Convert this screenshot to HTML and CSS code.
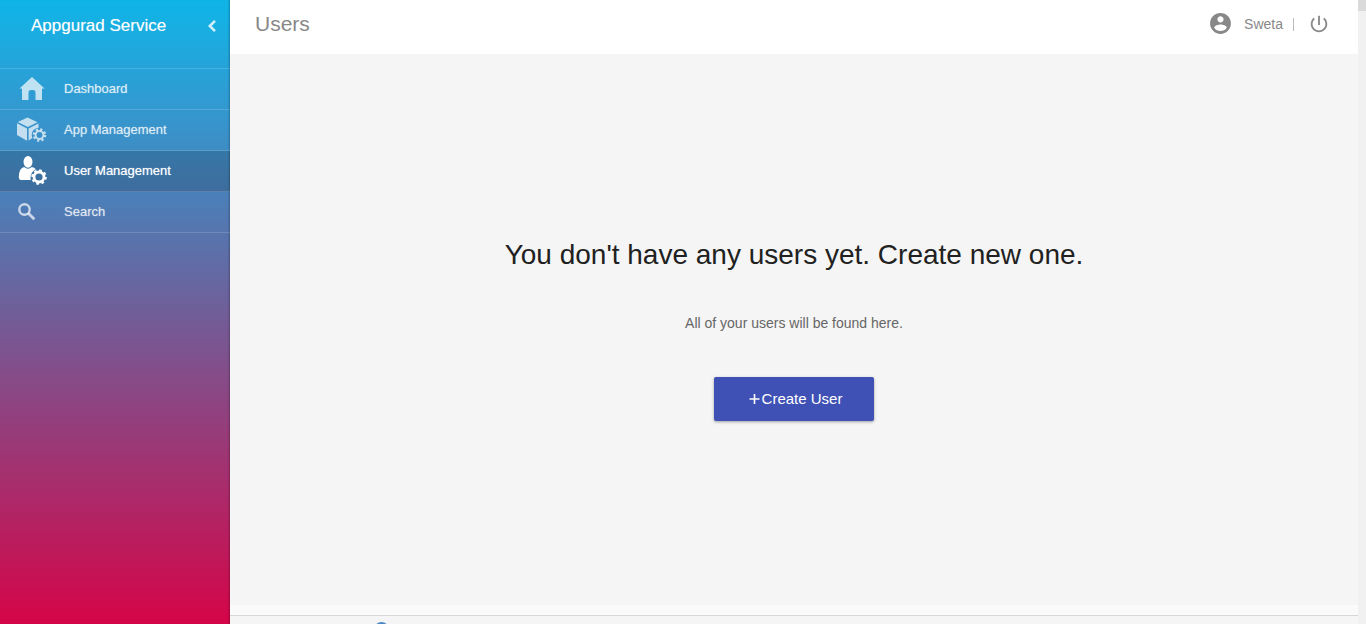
FILE: index.html
```html
<!DOCTYPE html>
<html lang="en">
<head>
<meta charset="utf-8">
<meta name="viewport" content="width=device-width, initial-scale=1">
<title>Users</title>
<link rel="stylesheet" href="styles.css">
</head>
<body>
<div class="shell">
  <aside class="sidebar">
    <div class="brand">
      <span class="brand-name">Appgurad Service</span>
      <button class="collapse" type="button" aria-label="Collapse menu">
        <svg width="10" height="14" viewBox="0 0 10 14"><path d="M8 1.800 2.800 7l5.200 5.200" fill="none" stroke="currentColor" stroke-width="2.600"/></svg>
      </button>
    </div>
    <nav class="menu">
      <a class="item" href="#">
        <svg class="icon" viewBox="0 0 32 32"><path fill="currentColor" d="M16 5 28.500 16.500H26V28h-6.500v-7.500q0-2.500-2.500-2.500h-2q-2.500 0-2.500 2.500V28H6V16.500H3.500z"/></svg>
        <span>Dashboard</span>
      </a>
      <a class="item" href="#">
        <svg class="icon" viewBox="0 0 32 32"><path fill="currentColor" d="M11.500 4.500 21.500 9.200 11.800 14 1.800 9zM1 10.300l10 5.200v12.300L1 22zM22.500 10.400v4.400q-6 1-6.700 6.200-.2 2.200.6 3.900L12.600 27.600V15.500z"/><circle cx="23.500" cy="22" r="3.900" fill="none" stroke="currentColor" stroke-width="2"/><circle cx="23.500" cy="22" r="5.700" fill="none" stroke="currentColor" stroke-width="2.200" stroke-dasharray="2.240 2.240"/></svg>
        <span>App Management</span>
      </a>
      <a class="item active" href="#" aria-current="page">
        <svg class="icon" viewBox="0 0 32 32"><ellipse cx="12" cy="7.800" rx="4.500" ry="5.900" fill="currentColor"/><path fill="currentColor" d="M8.200 13q3.800 3.400 7.600 0 2.600.6 4 2.200-5 2.400-5.200 8v2.800H5q-2.300 0-2.200-3.400.2-8.200 5.400-9.600z"/><circle cx="23" cy="23" r="5" fill="none" stroke="currentColor" stroke-width="2.800"/><circle cx="23" cy="23" r="6.900" fill="none" stroke="currentColor" stroke-width="1.800" stroke-dasharray="2.710 2.710"/></svg>
        <span>User Management</span>
      </a>
      <a class="item" href="#">
        <svg class="icon" viewBox="0 0 32 32"><circle cx="8.500" cy="14.500" r="5.200" fill="none" stroke="currentColor" stroke-width="2.400"/><path d="m12.300 18.300 6 6" fill="none" stroke="currentColor" stroke-width="2.800"/></svg>
        <span>Search</span>
      </a>
    </nav>
  </aside>
  <div class="page">
    <header class="topbar">
      <h1 class="title">Users</h1>
      <div class="account">
        <svg width="25" height="25" viewBox="0 0 24 24"><path fill="currentColor" d="M12 2C6.480 2 2 6.480 2 12s4.480 10 10 10 10-4.480 10-10S17.520 2 12 2zm0 3c1.660 0 3 1.340 3 3s-1.340 3-3 3-3-1.340-3-3 1.340-3 3-3zm0 14.200c-2.500 0-4.710-1.280-6-3.220.030-1.990 4-3.080 6-3.080 1.990 0 5.970 1.090 6 3.080-1.290 1.940-3.500 3.220-6 3.220z"/></svg>
        <span class="name">Sweta</span>
        <span class="divider"></span>
        <button class="power" type="button" aria-label="Log out">
          <svg width="22" height="22" viewBox="0 0 24 24"><path fill="currentColor" d="M13 3h-2v10h2V3zm4.830 2.170-1.420 1.420C17.990 7.860 19 9.810 19 12c0 3.870-3.130 7-7 7s-7-3.130-7-7c0-2.190 1.010-4.140 2.580-5.420L6.170 5.170C4.230 6.820 3 9.260 3 12c0 4.970 4.030 9 9 9s9-4.030 9-9c0-2.740-1.230-5.180-3.170-6.830z"/></svg>
        </button>
      </div>
    </header>
    <main class="empty">
      <h2 class="headline">You don't have any users yet. Create new one.</h2>
      <p class="hint">All of your users will be found here.</p>
      <button class="create" type="button">
        <svg width="12" height="12" viewBox="0 0 12 12"><path d="M6.500 1v10M1.500 6h10" stroke="currentColor" stroke-width="1.600"/></svg>
        <span>Create User</span>
      </button>
    </main>
    <footer class="footer"><span class="badge"></span></footer>
  </div>
  <div class="scroll-track"><div class="scroll-thumb"></div></div>
</div>
</body>
</html>
```
FILE: styles.css
```css
* { box-sizing: border-box; }

body {
  margin: 0;
  font-family: "Liberation Sans", Arial, sans-serif;
  background: #fafafa;
}

button {
  font: inherit;
  border: 0;
  padding: 0;
  background: none;
  color: inherit;
  cursor: pointer;
}

svg { display: block; }

.shell {
  display: grid;
  grid-template-columns: 230px 1fr 8px;
  height: 100vh;
  overflow: hidden;
}

.sidebar {
  color: #fff;
  background: linear-gradient(#0fb5e8 0%, #3498cf 18%, #4a80b9 31%, #5c70a9 40%, #d50548 100%);
  box-shadow: inset -2px 0 2px -1px rgba(0, 0, 0, .25);
}

.brand {
  display: flex;
  justify-content: space-between;
  align-items: center;
  height: 68px;
  padding: 0 13px 17px 31px;
}

.brand-name {
  font-size: 17px;
  text-shadow: 0 0 1px rgba(255, 255, 255, .4);
}

.collapse { color: rgba(255, 255, 255, .8); }

.menu { border-top: 1px solid rgba(255, 255, 255, .15); }

.item {
  display: flex;
  align-items: center;
  gap: 16px;
  height: 41px;
  padding: 0 0 2px 16px;
  border-bottom: 1px solid rgba(255, 255, 255, .15);
  color: rgba(255, 255, 255, .7);
  font-size: 13px;
  text-decoration: none;
  text-shadow: 0 0 1px rgba(255, 255, 255, .6);
}

.item.active {
  color: #fff;
  background: rgba(0, 0, 0, .15);
}

.icon {
  width: 32px;
  height: 32px;
}

.page {
  display: flex;
  flex-direction: column;
  min-width: 0;
}

.topbar {
  display: flex;
  justify-content: space-between;
  align-items: center;
  height: 54px;
  padding: 0 28px 7px 25px;
  background: #fff;
  color: #888;
}

.title {
  margin: 0;
  font-size: 21px;
  font-weight: 400;
}

.account {
  display: flex;
  align-items: center;
}

.name {
  margin-left: 11px;
  font-size: 14px;
}

.divider {
  width: 1px;
  height: 13px;
  margin: 2px 14px 0 10px;
  background: #bbb;
}

.empty {
  flex: 1;
  display: flex;
  flex-direction: column;
  align-items: center;
  justify-content: center;
  background: #f5f5f5;
}

.headline {
  margin: 0;
  color: #212121;
  font-size: 28px;
  font-weight: 400;
  line-height: 32px;
}

.hint {
  margin: 43px 0 45px;
  color: #666;
  font-size: 14px;
  line-height: 18px;
}

.create {
  display: flex;
  align-items: center;
  justify-content: center;
  gap: 2px;
  width: 160px;
  height: 44px;
  padding-left: 2px;
  border-radius: 2px;
  background: #3f51b5;
  color: #fff;
  font-size: 15px;
  box-shadow: 0 1px 3px rgba(0, 0, 0, .35);
}

.footer {
  height: 9px;
  margin-top: 10px;
  padding: 6px 0 0 144px;
  border-top: 1px solid #d8d8d8;
  background: #f5f5f5;
  overflow: hidden;
}

.badge {
  display: block;
  width: 15px;
  height: 15px;
  border-radius: 50%;
  background: #4a88c4;
}

.scroll-track { background: #f1f1f1; }

.scroll-thumb {
  height: 11px;
  background: #dadada;
}
```
